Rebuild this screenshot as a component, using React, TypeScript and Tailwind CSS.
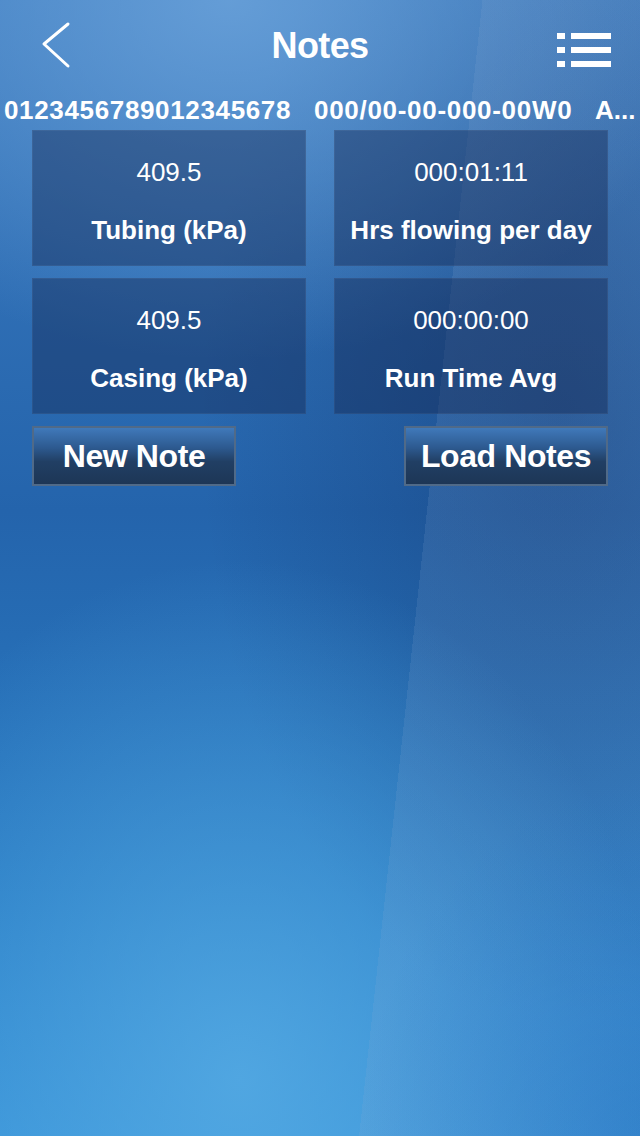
import React from "react";

const font = { fontFamily: '"Liberation Sans", Arial, Helvetica, sans-serif' };

function Card({ value, label }: { value: string; label: string }) {
  return (
    <div className="flex h-[136px] flex-col items-center border border-[rgba(255,255,255,0.05)] bg-[rgba(18,38,80,0.42)] text-white">
      <div className="mt-[25px] text-[26px] leading-[32px]">{value}</div>
      <div className="mt-[26px] text-[26px] font-bold leading-[32px]">{label}</div>
    </div>
  );
}

function Btn({ children }: { children: React.ReactNode }) {
  return (
    <button className="flex h-[60px] w-[204px] items-center justify-center border-2 border-[#506a88] bg-[linear-gradient(180deg,#4079ba_0%,#2d5a90_35%,#213f64_60%,#1d3656_100%)] text-[32px] font-bold tracking-[-0.4px] text-white">
      {children}
    </button>
  );
}

export default function App() {
  return (
    <div
      style={font}
      className="relative h-[1136px] w-[640px] overflow-hidden bg-[image:linear-gradient(96.2deg,transparent_63.2%,rgba(140,170,210,0.15)_63.2%),radial-gradient(ellipse_300px_360px_at_660px_1140px,rgba(20,105,190,0.55),transparent),radial-gradient(ellipse_420px_520px_at_240px_1080px,rgba(90,175,230,0.75),transparent),radial-gradient(ellipse_480px_360px_at_230px_0px,rgba(110,165,220,0.8),transparent),radial-gradient(ellipse_360px_600px_at_560px_420px,rgba(10,35,85,0.35),transparent),linear-gradient(180deg,#3d7cc0_0%,#2464ac_45%,#2a7ec6_80%,#3590d6_100%)]"
    >
      {/* header */}
      <div className="grid h-[92px] grid-cols-[120px_1fr_120px] items-center">
        <svg width="32" height="48" viewBox="0 0 32 48" className="-mt-[2px] ml-[40px]">
          <path d="M28 3 L4 23 L28 45" fill="none" stroke="white" strokeWidth="3" strokeLinecap="round" strokeLinejoin="round" />
        </svg>
        <div className="text-center text-[36px] font-bold tracking-[-0.6px] text-white">Notes</div>
        <svg width="56" height="40" viewBox="0 0 56 40" className="ml-[36px] mt-[10px]">
          <rect x="1" y="2" width="8" height="6" fill="white" />
          <rect x="15" y="2" width="40" height="6" fill="white" />
          <rect x="1" y="16" width="8" height="6" fill="white" />
          <rect x="15" y="16" width="40" height="6" fill="white" />
          <rect x="1" y="30" width="8" height="6" fill="white" />
          <rect x="15" y="30" width="40" height="6" fill="white" />
        </svg>
      </div>
      {/* sub row */}
      <div className="flex h-[36px] items-center text-[26px] font-bold leading-none text-white">
        <div className="ml-[4px] w-[310px] whitespace-nowrap tracking-[0.65px]">0123456789012345678</div>
        <div className="w-[281px] whitespace-nowrap tracking-[0.7px]">000/00-00-000-00W0</div>
        <div className="whitespace-nowrap">A...</div>
      </div>
      {/* cards */}
      <div className="mt-[2px] grid grid-cols-2 gap-x-[28px] gap-y-[12px] px-[32px]">
        <Card value="409.5" label="Tubing (kPa)" />
        <Card value="000:01:11" label="Hrs flowing per day" />
        <Card value="409.5" label="Casing (kPa)" />
        <Card value="000:00:00" label="Run Time Avg" />
      </div>
      <div className="mt-[12px] flex justify-between px-[32px]">
        <Btn>New Note</Btn>
        <Btn>Load Notes</Btn>
      </div>
    </div>
  );
}
